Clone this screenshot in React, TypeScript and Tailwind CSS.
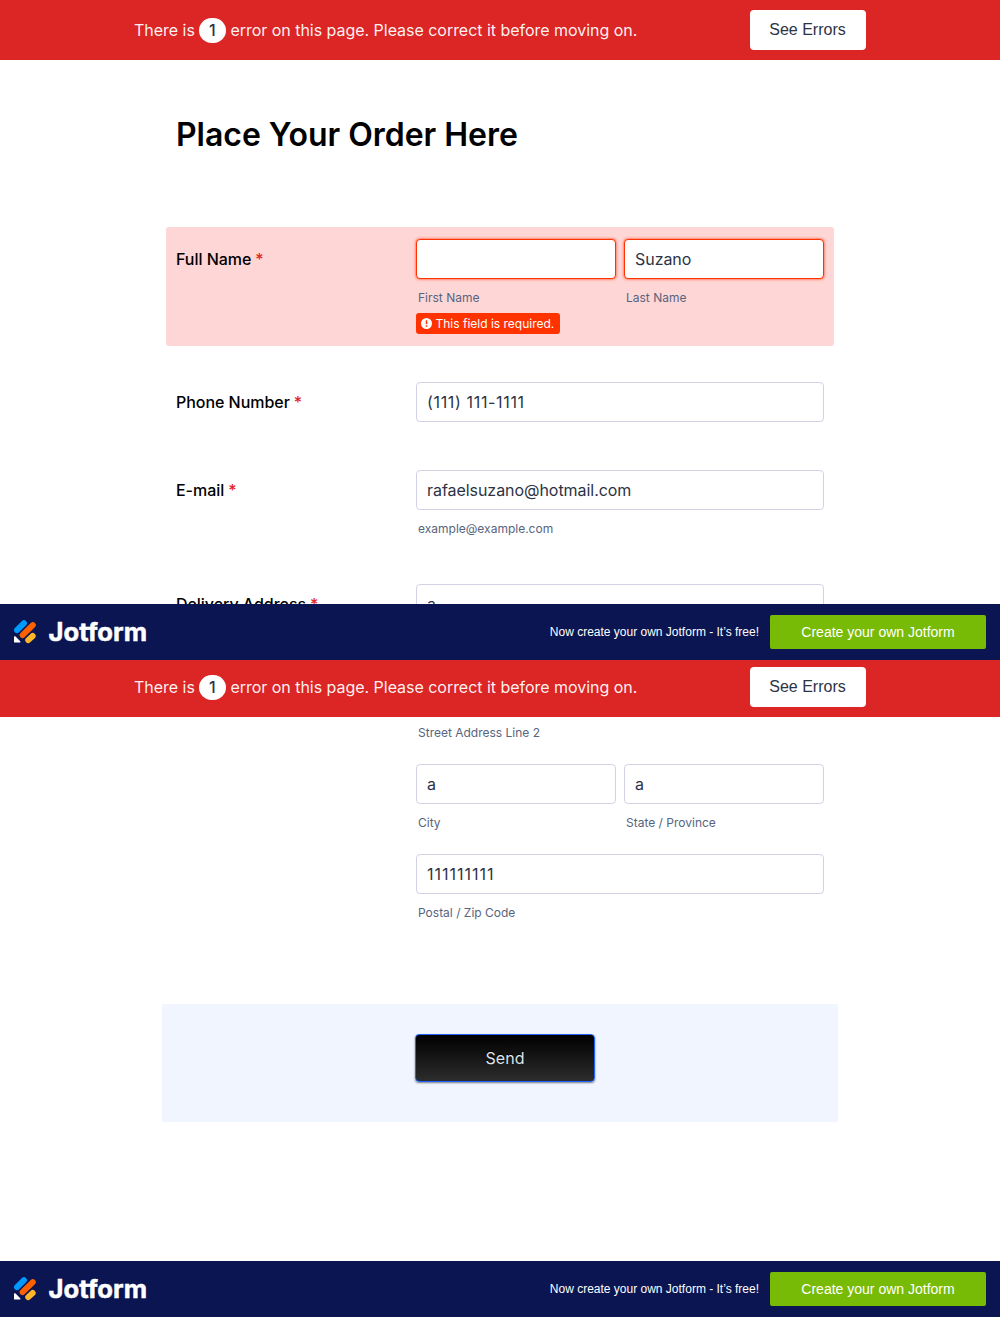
import type { ReactNode } from "react";

function ErrorBanner({ clipped = false }: { clipped?: boolean }) {
  return (
    <div className={clipped ? "flex h-[57px] shrink-0 items-end overflow-hidden bg-[#dc2626]" : "flex h-[60px] shrink-0 items-end bg-[#dc2626]"}>
      <div className="mx-auto flex h-[60px] w-[732px] items-center justify-between">
        <p className="flex items-center text-base whitespace-pre text-white/95">
          <span className="tracking-[-0.02px]">There is</span>
          <span className="mr-[4.6px] ml-[4px] flex h-[25px] w-[27px] items-center justify-center rounded-full bg-white font-medium text-[#2c3345]">1</span>
          <span className="tracking-[-0.03px]">error on this page. Please correct it before moving on.</span>
        </p>
        <button className="h-10 w-[116px] rounded bg-white pr-px font-['Liberation_Sans',sans-serif] text-base text-[#2c3345]">
          See Errors
        </button>
      </div>
    </div>
  );
}

function JotformLogo() {
  return (
    <svg width="134" height="28" viewBox="0 0 134 28" role="img" aria-label="Jotform">
      <g strokeLinecap="round" strokeWidth="5.9">
        <path d="M3 12.1 10 5.2" stroke="#0099ff" />
        <path d="M8.6 17.1 18.8 7.1" stroke="#ff6100" />
        <path d="M14.2 22.2 18.7 18" stroke="#ffb629" />
      </g>
      <path d="M0 19.3c0-.9 1-1.3 1.6-.7l4.6 4.6c.6.6.2 1.4-.6 1.4H1c-.6 0-1-.4-1-.9z" fill="#fff" />
      <text x="34.5" y="23" textLength="98.5" lengthAdjust="spacingAndGlyphs" fill="#fff" stroke="#fff" strokeWidth="0.5" className="font-['Inter',sans-serif] text-[25px] font-bold">
        Jotform
      </text>
    </svg>
  );
}

function BrandBar() {
  return (
    <footer className="flex h-14 shrink-0 items-center justify-between bg-[#0a1551] px-3.5 font-['Liberation_Sans',sans-serif] text-white">
      <JotformLogo />
      <div className="flex items-center gap-[11px]">
        <span className="text-xs">Now create your own Jotform - It’s free!</span>
        <button className="h-[34px] w-[216px] rounded-xs bg-[#78bb07] text-sm">Create your own Jotform</button>
      </div>
    </footer>
  );
}

type FieldProps = { value?: string; hint?: string; error?: boolean; spacing?: string };

function Field({ value = "", hint, error = false, spacing = "tracking-normal" }: FieldProps) {
  return (
    <div className="flex min-w-0 flex-1 flex-col">
      <div
        className={
          error
            ? "flex h-10 items-center rounded border border-[#ff3200] bg-white px-2.5 text-base text-[#2c3345] shadow-[0_0_3px_#ff3200]"
            : "flex h-10 items-center rounded border border-[#d1d3e4] bg-white px-2.5 text-base text-[#2c3345]"
        }
      >
        <span className={spacing}>{value}</span>
      </div>
      {hint && <span className="mt-2.5 h-4 pl-0.5 text-xs leading-[18px] text-[#57647e]">{hint}</span>}
    </div>
  );
}

function Row({ label, error = false, children }: { label: string; error?: boolean; children: ReactNode }) {
  return (
    <div className={error ? "flex rounded-[3px] bg-[#ffd6d6] px-2.5 py-3" : "flex px-2.5 py-3"}>
      <div className="flex h-10 w-60 shrink-0 items-center gap-1 text-base font-medium text-black">
        <span className="tracking-[-0.04px]">{label}</span>
        <span className="text-[#e52222]">*</span>
      </div>
      <div className="min-w-0 flex-1">{children}</div>
    </div>
  );
}

function RequiredNote() {
  return (
    <div className="mt-2 flex h-[21px] w-36 items-center gap-[3.5px] rounded-[3px] bg-[#ff3200] pl-[5px] text-xs text-white">
      <svg width="11" height="11" viewBox="0 0 11 11">
        <circle cx="5.5" cy="5.5" r="5.5" fill="#fff" />
        <path d="M5.5 2.3v3.9" stroke="#ff3200" strokeWidth="1.5" />
        <path d="M5.5 7.3v1.5" stroke="#ff3200" strokeWidth="1.5" />
      </svg>
      This field is required.
    </div>
  );
}

export default function App() {
  return (
    <div className="w-[1000px] bg-white font-['Inter',sans-serif]">
      <section className="flex h-[660px] flex-col">
        <ErrorBanner />
        <main className="mx-auto min-h-0 w-[668px] flex-1 overflow-hidden">
          <h1 className="mt-[55px] mb-[72px] ml-2.5 h-10 text-[32px] leading-10 font-semibold tracking-[-0.03px] text-black">
            Place Your Order Here
          </h1>
          <div className="flex flex-col gap-6">
            <Row label="Full Name" error>
              <div className="flex gap-2">
                <Field error hint="First Name" />
                <Field error value="Suzano" hint="Last Name" spacing="tracking-[-0.05px]" />
              </div>
              <RequiredNote />
            </Row>
            <Row label="Phone Number">
              <Field value="(111) 111-1111" spacing="tracking-[0.65px]" />
            </Row>
            <Row label="E-mail">
              <Field value="rafaelsuzano@hotmail.com" hint="example@example.com" spacing="tracking-[-0.05px]" />
            </Row>
            <Row label="Delivery Address">
              <Field value="a" />
            </Row>
          </div>
        </main>
        <BrandBar />
      </section>

      <section className="flex h-[657px] flex-col">
        <ErrorBanner clipped />
        <main className="mx-auto w-[676px] flex-1">
          <div className="mr-3.5 ml-[254px] flex flex-col gap-6 pt-[7px]">
            <span className="h-4 pl-0.5 text-xs leading-[18px] text-[#57647e]">Street Address Line 2</span>
            <div className="flex gap-2">
              <Field value="a" hint="City" />
              <Field value="a" hint="State / Province" />
            </div>
            <Field value="111111111" hint="Postal / Zip Code" spacing="tracking-[1px]" />
          </div>
          <div className="mt-[84px] flex h-[118px] rounded-xs bg-[#f1f5ff] pt-[30px] pl-[253px]">
            <button className="h-12 w-[180px] rounded border border-[#1f62ff] bg-[linear-gradient(#000,#2d2d2d)] text-base text-[#dfe3ea] shadow-[0_1px_2px_rgba(0,0,0,0.5)] [text-shadow:0_-1px_1px_#000]">
              Send
            </button>
          </div>
        </main>
        <BrandBar />
      </section>
    </div>
  );
}
